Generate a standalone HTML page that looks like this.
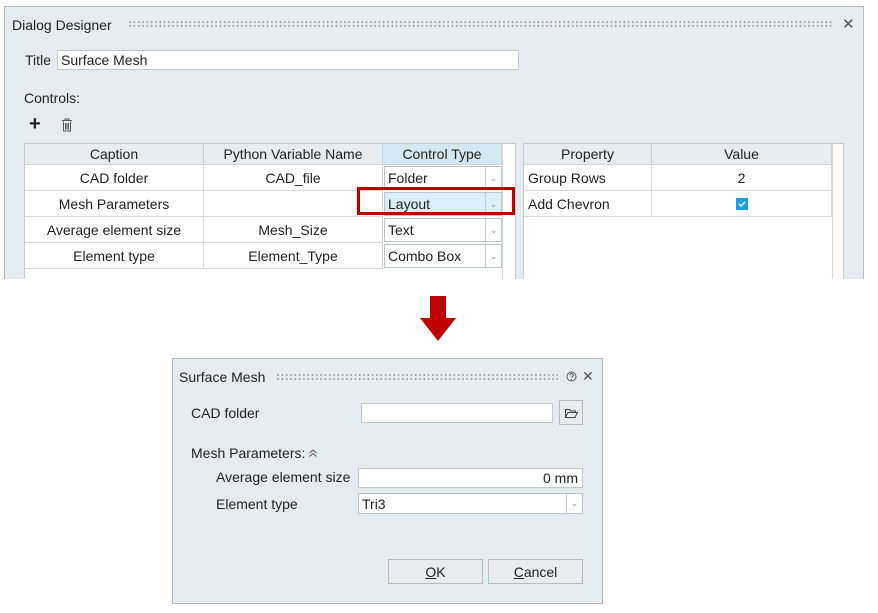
<!DOCTYPE html><html><head><style>
*{box-sizing:border-box;margin:0;padding:0}
body{width:878px;height:613px;background:#fff;position:relative;overflow:hidden;font-family:"Liberation Sans",Arial,sans-serif;font-size:14px;color:#222}
.a{position:absolute}
.dots{position:absolute;height:8px;background-image:radial-gradient(circle,#9aa0a6 0.8px,transparent 1.1px);background-size:4.3px 4px}
.inp{position:absolute;background:#fff;border:1px solid #c3c8cc}
.cell{position:absolute;display:flex;align-items:center;justify-content:center;border-right:1px solid #d6dadd;border-bottom:1px solid #d6dadd;background:#fff}
.hd{background:#e6edf1;border-color:#cfd5d9}
.cb{position:absolute;border:1px solid #bfc4c8;background:#fff;display:flex;align-items:center;padding-left:3px}
.cb i{position:absolute;right:0;top:0;bottom:0;width:16px;border-left:1px solid #c8ccd0;font-style:normal;color:#999;font-size:9px;display:flex;align-items:center;justify-content:center}
.btn{position:absolute;border:1px solid #b5bbc0;background:#e8ecef;display:flex;align-items:center;justify-content:center}
</style></head><body>
<div class="a" style="left:4px;top:6px;width:860px;height:280px;background:#e5ecf0;border:1px solid #b3b9bd"></div>
<div class="a" style="left:12px;top:17px">Dialog Designer</div>
<div class="dots" style="left:128px;top:20px;width:706px"></div>
<div class="a" style="left:842px;top:15px;font-size:15px;color:#555">✕</div>
<div class="a" style="left:25px;top:52px">Title</div>
<div class="inp" style="left:57px;top:50px;width:462px;height:20px;padding-left:3px;line-height:18px">Surface Mesh</div>
<div class="a" style="left:24px;top:90px">Controls:</div>
<div class="a" style="left:29px;top:113px;font-size:20px;font-weight:bold">+</div>
<svg class="a" style="left:61px;top:118px" width="12" height="14" viewBox="0 0 12 14"><path d="M1 2.5h10M4 2.5V1h4v1.5M2.5 3.5v9.5h7V3.5M4.5 5v6.5M6 5v6.5M7.5 5v6.5" stroke="#555" fill="none" stroke-width="1"/></svg>
<div class="a" style="left:24px;top:143px;width:492px;height:140px;background:#fff;border:1px solid #c6ccd0"></div>
<div class="a" style="left:502px;top:144px;width:13px;height:140px;background:#fff;border-left:1px solid #d0d5d8"></div>
<div class="cell hd" style="left:25px;top:144px;width:179px;height:21px">Caption</div>
<div class="cell hd" style="left:204px;top:144px;width:179px;height:21px">Python Variable Name</div>
<div class="cell hd" style="left:383px;top:144px;width:119px;height:21px;background:#d3e8f1">Control Type</div>
<div class="cell" style="left:25px;top:165px;width:179px;height:26px">CAD folder</div>
<div class="cell" style="left:204px;top:165px;width:179px;height:26px">CAD_file</div>
<div class="cell" style="left:25px;top:191px;width:179px;height:26px">Mesh Parameters</div>
<div class="cell" style="left:204px;top:191px;width:179px;height:26px"></div>
<div class="cell" style="left:25px;top:217px;width:179px;height:26px">Average element size</div>
<div class="cell" style="left:204px;top:217px;width:179px;height:26px">Mesh_Size</div>
<div class="cell" style="left:25px;top:243px;width:179px;height:26px">Element type</div>
<div class="cell" style="left:204px;top:243px;width:179px;height:26px">Element_Type</div>
<div class="cb" style="left:384px;top:166px;width:118px;height:24px">Folder<i>⌄</i></div>
<div class="cb" style="left:384px;top:192px;width:118px;height:24px;background:#d9eef8">Layout<i>⌄</i></div>
<div class="cb" style="left:384px;top:218px;width:118px;height:24px">Text<i>⌄</i></div>
<div class="cb" style="left:384px;top:244px;width:118px;height:24px">Combo Box<i>⌄</i></div>
<div class="a" style="left:357px;top:187px;width:158px;height:28px;border:3px solid #c00000"></div>
<div class="a" style="left:523px;top:143px;width:321px;height:140px;background:#fff;border:1px solid #c6ccd0"></div>
<div class="a" style="left:832px;top:144px;width:11px;height:140px;background:#fff;border-left:1px solid #d0d5d8"></div>
<div class="cell hd" style="left:524px;top:144px;width:128px;height:21px">Property</div>
<div class="cell hd" style="left:652px;top:144px;width:180px;height:21px">Value</div>
<div class="cell" style="left:524px;top:165px;width:128px;height:26px;justify-content:flex-start;padding-left:4px">Group Rows</div>
<div class="cell" style="left:652px;top:165px;width:180px;height:26px">2</div>
<div class="cell" style="left:524px;top:191px;width:128px;height:26px;justify-content:flex-start;padding-left:4px">Add Chevron</div>
<div class="cell" style="left:652px;top:191px;width:180px;height:26px"><svg width="12" height="12"><rect width="12" height="12" fill="#1aa0e0"/><path d="M3 6l2 2 4-4" stroke="#fff" stroke-width="1.4" fill="none"/></svg></div>
<div class="a" style="left:0;top:279px;width:878px;height:20px;background:#fff"></div>
<svg class="a" style="left:419px;top:295px" width="38" height="47"><path d="M11 1h16v22h10L19 46 1 23h10z" fill="#c00000"/></svg>
<div class="a" style="left:172px;top:358px;width:431px;height:246px;background:#e5ecf0;border:1px solid #b3b9bd"></div>
<div class="a" style="left:179px;top:369px">Surface Mesh</div>
<div class="dots" style="left:276px;top:373px;width:282px"></div>
<svg class="a" style="left:566px;top:371px" width="11" height="11"><circle cx="5.5" cy="5.5" r="4.5" stroke="#555" fill="none"/><path d="M4 4.3a1.6 1.6 0 1 1 2 1.5v1" stroke="#555" fill="none"/><circle cx="5.5" cy="8.4" r=".6" fill="#555"/></svg>
<div class="a" style="left:582px;top:368px;font-size:14px;color:#555">✕</div>
<div class="a" style="left:191px;top:405px">CAD folder</div>
<div class="inp" style="left:361px;top:403px;width:192px;height:20px"></div>
<div class="btn" style="left:559px;top:400px;width:24px;height:25px"><svg width="13" height="10"><path d="M.5 9.5V1.5h4l1 1.5h5v2M.5 9.5l2.5-5h9.5l-2.5 5z" stroke="#444" fill="none"/></svg></div>
<div class="a" style="left:191px;top:445px">Mesh Parameters:</div>
<svg class="a" style="left:308px;top:448px" width="10" height="10"><path d="M1.5 5l3.5-3 3.5 3M1.5 8.5l3.5-3 3.5 3" stroke="#555" fill="none"/></svg>
<div class="a" style="left:216px;top:469px">Average element size</div>
<div class="inp" style="left:358px;top:468px;width:225px;height:20px;text-align:right;padding-right:4px;line-height:18px">0 mm</div>
<div class="a" style="left:216px;top:496px">Element type</div>
<div class="cb" style="left:358px;top:493px;width:225px;height:21px">Tri3<i>⌄</i></div>
<div class="btn" style="left:388px;top:559px;width:95px;height:25px"><u>O</u>K</div>
<div class="btn" style="left:488px;top:559px;width:95px;height:25px"><u>C</u>ancel</div>
</body></html>
